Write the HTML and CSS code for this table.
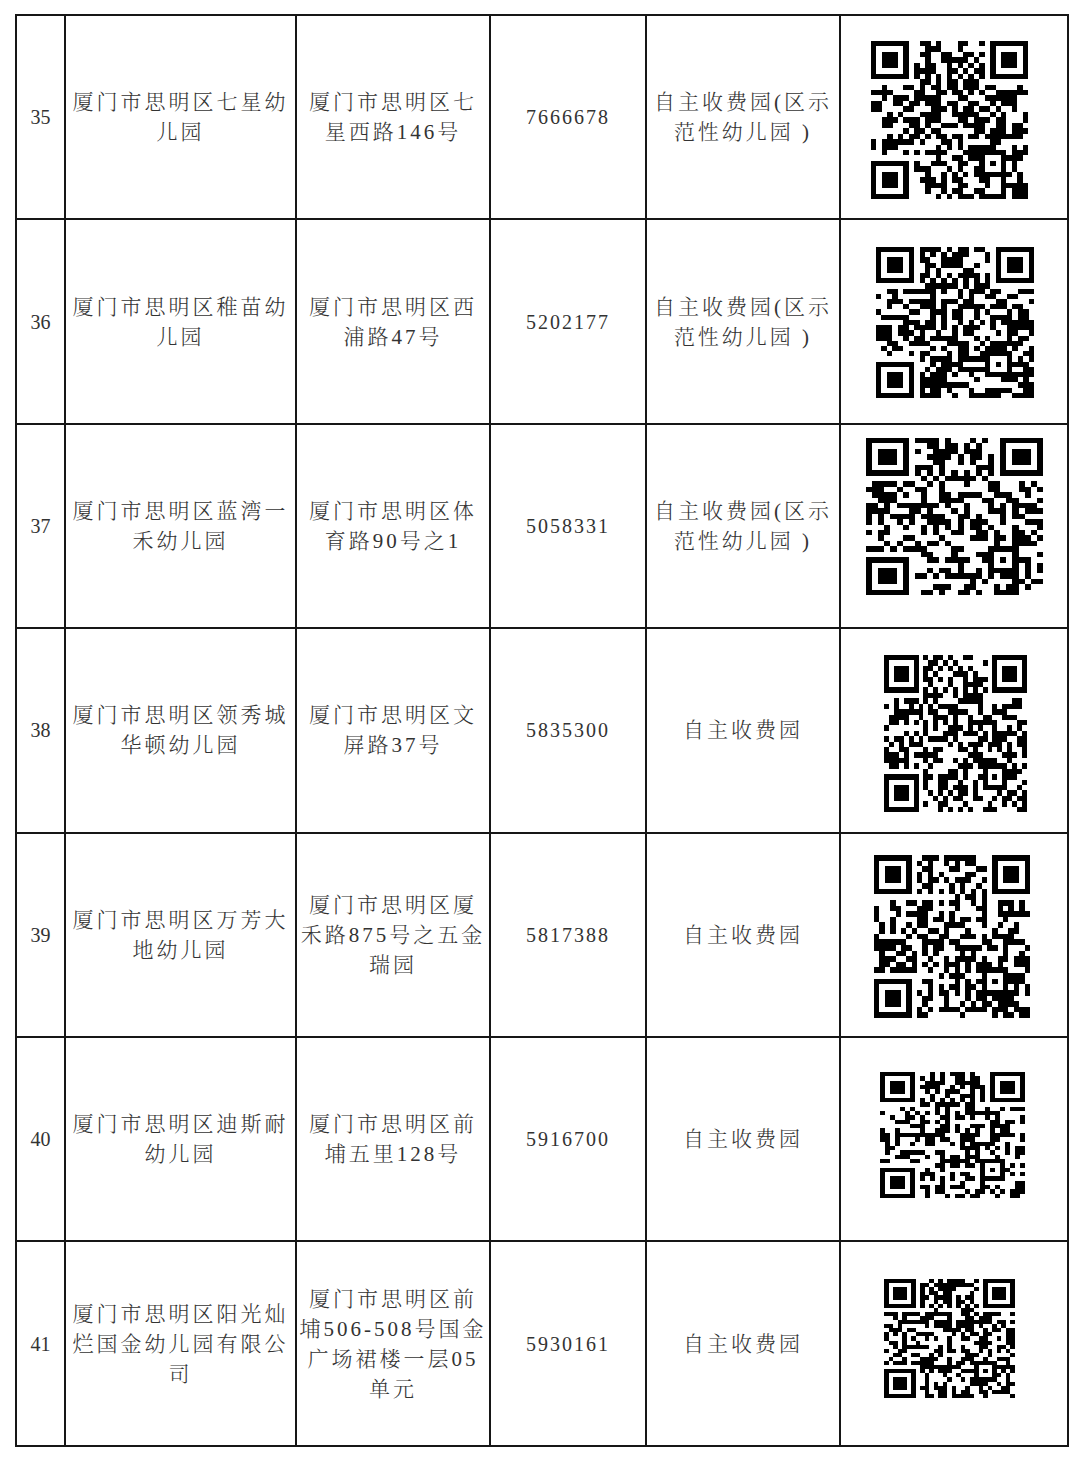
FILE: index.html
```html
<!DOCTYPE html>
<html lang="zh-CN">
<head>
<meta charset="utf-8">
<title>幼儿园名单</title>
<link rel="stylesheet" href="styles.css">
</head>
<body>
<table class="roster">
  <colgroup>
    <col class="c-no"><col class="c-name"><col class="c-addr"><col class="c-tel"><col class="c-type"><col class="c-qr">
  </colgroup>
  <tbody>
    <tr>
      <td class="no">35</td>
      <td class="txt">厦门市思明区七星幼<br>儿园</td>
      <td class="txt">厦门市思明区七<br>星西路146号</td>
      <td class="tel">7666678</td>
      <td class="txt">自主收费园(区示<br>范性幼儿园 )</td>
      <td class="qr"><svg class="qr-code" data-seed="35" data-w="157" data-h="158" data-dx="-5" data-dy="3"></svg></td>
    </tr>
    <tr>
      <td class="no">36</td>
      <td class="txt">厦门市思明区稚苗幼<br>儿园</td>
      <td class="txt">厦门市思明区西<br>浦路47号</td>
      <td class="tel">5202177</td>
      <td class="txt">自主收费园(区示<br>范性幼儿园 )</td>
      <td class="qr"><svg class="qr-code" data-seed="36" data-w="158" data-h="151" data-dx="1" data-dy="1"></svg></td>
    </tr>
    <tr>
      <td class="no">37</td>
      <td class="txt">厦门市思明区蓝湾一<br>禾幼儿园</td>
      <td class="txt">厦门市思明区体<br>育路90号之1</td>
      <td class="tel">5058331</td>
      <td class="txt">自主收费园(区示<br>范性幼儿园 )</td>
      <td class="qr"><svg class="qr-code" data-seed="37" data-w="177" data-h="157" data-dx="0" data-dy="-9"></svg></td>
    </tr>
    <tr>
      <td class="no">38</td>
      <td class="txt">厦门市思明区领秀城<br>华顿幼儿园</td>
      <td class="txt">厦门市思明区文<br>屏路37号</td>
      <td class="tel">5835300</td>
      <td class="txt">自主收费园</td>
      <td class="qr"><svg class="qr-code" data-seed="38" data-w="143" data-h="157" data-dx="1" data-dy="3"></svg></td>
    </tr>
    <tr>
      <td class="no">39</td>
      <td class="txt">厦门市思明区万芳大<br>地幼儿园</td>
      <td class="txt">厦门市思明区厦<br>禾路875号之五金<br>瑞园</td>
      <td class="tel">5817388</td>
      <td class="txt">自主收费园</td>
      <td class="qr"><svg class="qr-code" data-seed="39" data-w="156" data-h="163" data-dx="-2" data-dy="2"></svg></td>
    </tr>
    <tr>
      <td class="no">40</td>
      <td class="txt">厦门市思明区迪斯耐<br>幼儿园</td>
      <td class="txt">厦门市思明区前<br>埔五里128号</td>
      <td class="tel">5916700</td>
      <td class="txt">自主收费园</td>
      <td class="qr"><svg class="qr-code" data-seed="40" data-w="145" data-h="126" data-dx="-2" data-dy="-4"></svg></td>
    </tr>
    <tr>
      <td class="no">41</td>
      <td class="txt">厦门市思明区阳光灿<br>烂国金幼儿园有限公<br>司</td>
      <td class="txt">厦门市思明区前<br>埔506-508号国金<br>广场裙楼一层05<br>单元</td>
      <td class="tel">5930161</td>
      <td class="txt">自主收费园</td>
      <td class="qr"><svg class="qr-code" data-seed="41" data-w="131" data-h="119" data-dx="-5" data-dy="-5"></svg></td>
    </tr>
  </tbody>
</table>
<script src="qr.js"></script>
</body>
</html>
```

FILE: styles.css
```css
html, body {
  margin: 0;
  padding: 0;
  background: #ffffff;
}

body {
  font-family: "Liberation Serif", "Noto Serif CJK SC", "Noto Sans CJK SC", serif;
  color: #333333;
}

.roster {
  border-collapse: collapse;
  table-layout: fixed;
  width: 1053px;
  margin: 14px 0 0 15px;
}

.c-no { width: 49px; }
.c-name { width: 231px; }
.c-addr { width: 194px; }
.c-tel { width: 156px; }
.c-type { width: 194px; }
.c-qr { width: 228px; }

.roster tr {
  height: 204.4px;
}

.roster td {
  border: 2px solid #161616;
  padding: 0 2px;
  text-align: center;
  vertical-align: middle;
  white-space: nowrap;
  overflow: visible;
}

.no {
  font-size: 20px;
  line-height: 30px;
}

.tel {
  font-size: 20px;
  letter-spacing: 2px;
  line-height: 30px;
}

.txt {
  font-size: 21px;
  letter-spacing: 3px;
  line-height: 30px;
  font-weight: 300;
}

.qr {
  padding: 0;
}

.qr-code {
  display: block;
  margin: 0 auto;
}
```

FILE: qr.js
```js
(function () {
  function rng(seed) {
    return function () {
      seed |= 0;
      seed = (seed + 0x6D2B79F5) | 0;
      var t = Math.imul(seed ^ (seed >>> 15), 1 | seed);
      t = (t + Math.imul(t ^ (t >>> 7), 61 | t)) ^ t;
      return ((t ^ (t >>> 14)) >>> 0) / 4294967296;
    };
  }
  var N = 29;
  var svgs = document.querySelectorAll('svg.qr-code');
  svgs.forEach(function (svg) {
    var seed = parseInt(svg.getAttribute('data-seed'), 10) * 7919 + 13;
    var rand = rng(seed);
    var g = [], fixed = [];
    for (var r = 0; r < N; r++) {
      g.push(new Array(N).fill(0));
      fixed.push(new Array(N).fill(false));
    }
    function finder(r0, c0) {
      for (var i = -1; i <= 7; i++) {
        for (var j = -1; j <= 7; j++) {
          var r = r0 + i, c = c0 + j;
          if (r < 0 || c < 0 || r >= N || c >= N) continue;
          fixed[r][c] = true;
          var dark = false;
          if (i >= 0 && i <= 6 && j >= 0 && j <= 6) {
            dark = i === 0 || i === 6 || j === 0 || j === 6 || (i >= 2 && i <= 4 && j >= 2 && j <= 4);
          }
          g[r][c] = dark ? 1 : 0;
        }
      }
    }
    finder(0, 0);
    finder(0, N - 7);
    finder(N - 7, 0);
    for (var k = 8; k < N - 8; k++) {
      g[6][k] = k % 2 === 0 ? 1 : 0; fixed[6][k] = true;
      g[k][6] = k % 2 === 0 ? 1 : 0; fixed[k][6] = true;
    }
    for (var i = -2; i <= 2; i++) {
      for (var j = -2; j <= 2; j++) {
        var rr = 22 + i, cc = 22 + j;
        fixed[rr][cc] = true;
        g[rr][cc] = (Math.max(Math.abs(i), Math.abs(j)) !== 1) ? 1 : 0;
      }
    }
    for (var r2 = 0; r2 < N; r2++) {
      for (var c2 = 0; c2 < N; c2++) {
        if (!fixed[r2][c2]) g[r2][c2] = rand() < 0.52 ? 1 : 0;
      }
    }
    var d = '';
    for (var y = 0; y < N; y++) {
      var x = 0;
      while (x < N) {
        if (g[y][x]) {
          var s = x;
          while (x < N && g[y][x]) x++;
          d += 'M' + s + ' ' + y + 'h' + (x - s) + 'v1h-' + (x - s) + 'z';
        } else {
          x++;
        }
      }
    }
    var ns = 'http://www.w3.org/2000/svg';
    svg.setAttribute('viewBox', '0 0 ' + N + ' ' + N);
    svg.setAttribute('preserveAspectRatio', 'none');
    svg.setAttribute('width', svg.getAttribute('data-w'));
    svg.setAttribute('height', svg.getAttribute('data-h'));
    svg.setAttribute('shape-rendering', 'crispEdges');
    var p = document.createElementNS(ns, 'path');
    p.setAttribute('d', d);
    p.setAttribute('fill', '#000');
    svg.appendChild(p);
    var dx = parseFloat(svg.getAttribute('data-dx')) || 0;
    var dy = parseFloat(svg.getAttribute('data-dy')) || 0;
    svg.style.transform = 'translate(' + dx + 'px,' + dy + 'px)';
  });
})();
```
